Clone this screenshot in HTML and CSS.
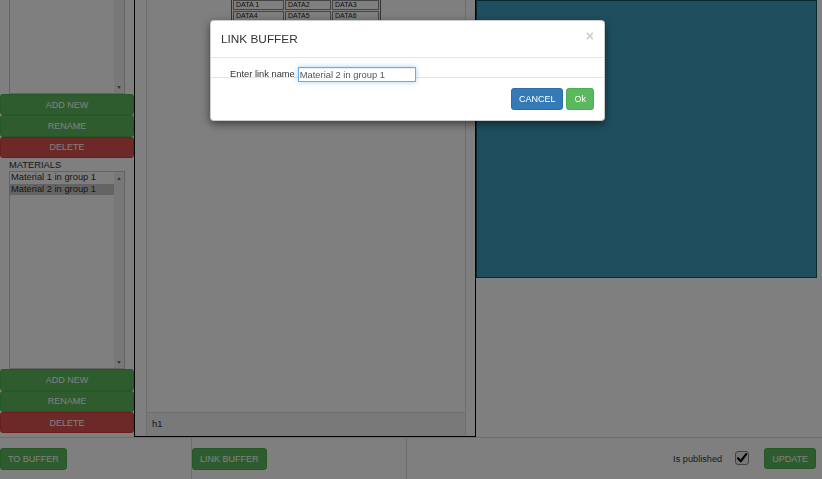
FILE: index.html
```html
<!DOCTYPE html>
<html>
<head>
<meta charset="utf-8">
<title>Editor</title>
<link rel="stylesheet" href="styles.css">
</head>
<body>
<div class="app">
  <div class="main">
    <div class="left">
      <div class="listbox listbox-top">
        <div class="list-items"></div>
        <div class="scrollbar"><span class="arrow-down"></span></div>
      </div>
      <div class="btn-stack">
        <button class="btn btn-success btn-block">ADD NEW</button>
        <button class="btn btn-success btn-block">RENAME</button>
        <button class="btn btn-danger btn-block">DELETE</button>
      </div>
      <div class="list-label">MATERIALS</div>
      <div class="listbox listbox-materials">
        <div class="list-items">
          <div class="list-item">Material 1 in group 1</div>
          <div class="list-item selected">Material 2 in group 1</div>
        </div>
        <div class="scrollbar"><span class="arrow-up"></span><span class="arrow-down"></span></div>
      </div>
      <div class="btn-stack">
        <button class="btn btn-success btn-block">ADD NEW</button>
        <button class="btn btn-success btn-block">RENAME</button>
        <button class="btn btn-danger btn-block">DELETE</button>
      </div>
    </div>
    <div class="center">
      <div class="canvas-panel">
        <div class="canvas-area">
          <table class="data-table">
            <tr><td class="c1">DATA 1</td><td class="c2">DATA2</td><td class="c3">DATA3</td></tr>
            <tr><td class="c1">DATA4</td><td class="c2">DATA5</td><td class="c3">DATA6</td></tr>
            <tr><td class="c1">DATA7</td><td class="c2">DATA8</td><td class="c3">DATA9</td></tr>
          </table>
        </div>
        <div class="panel-footer">h1</div>
      </div>
    </div>
    <div class="right">
      <div class="preview"></div>
    </div>
  </div>
  <div class="bottom-bar">
    <div class="bar-section s1"><button class="btn btn-success btn-bar">TO BUFFER</button></div>
    <div class="bar-section s2"><button class="btn btn-success btn-bar">LINK BUFFER</button></div>
    <div class="bar-section s3">
      <span class="pub-label">Is published</span>
      <span class="checkbox">
        <svg width="14" height="14" viewBox="0 0 14 14"><rect x="0.5" y="0.5" width="13" height="13" rx="2.5" fill="#eeeeee" stroke="#888"/><path d="M3 7.2 L5.8 10.2 L11.2 3.2" fill="none" stroke="#000" stroke-width="2.2" stroke-linecap="round" stroke-linejoin="round"/></svg>
      </span>
      <button class="btn btn-success btn-update">UPDATE</button>
    </div>
  </div>
</div>
<div class="backdrop"></div>
<div class="modal">
  <div class="modal-header">
    <h4 class="modal-title">LINK BUFFER</h4>
    <button class="close">&times;</button>
  </div>
  <div class="modal-body">
    <div class="form-row">
      <label class="form-label">Enter link name</label>
      <input class="form-input" type="text" value="Material 2 in group 1">
    </div>
  </div>
  <div class="modal-footer">
    <button class="btn btn-primary btn-modal">CANCEL</button>
    <button class="btn btn-success btn-modal">Ok</button>
  </div>
</div>
</body>
</html>
```

FILE: styles.css
```css
* { box-sizing: border-box; }
html, body { margin: 0; padding: 0; }
body {
  font-family: "Liberation Sans", Arial, sans-serif;
  font-size: 9.33px;
  color: #333;
  background: #fff;
  width: 822px;
  height: 479px;
  overflow: hidden;
}
.app { display: flex; flex-direction: column; height: 479px; }
.main { display: flex; height: 437px; }

/* left column */
.left { width: 134px; display: flex; flex-direction: column; }
.listbox {
  display: flex;
  margin: 0 9px 0 9px;
  border: 1px solid #c8c8c8;
  background: #fff;
}
.listbox-top { height: 94px; border-top: none; }
.listbox-materials { height: 198px; }
.list-items { flex: 1; }
.list-item { height: 11.33px; line-height: 11.33px; padding-left: 1px; white-space: nowrap; }
.list-item.selected { background: #c8c8c8; }
.scrollbar {
  width: 10px;
  background: #f1f1f1;
  display: flex;
  flex-direction: column;
  justify-content: space-between;
  align-items: center;
  padding: 5px 0 4px;
}
.listbox-top .scrollbar { justify-content: flex-end; }
.arrow-up, .arrow-down {
  width: 0; height: 0;
  border-left: 2.5px solid transparent;
  border-right: 2.5px solid transparent;
}
.arrow-up { border-bottom: 3px solid #777; }
.arrow-down { border-top: 3px solid #777; }
.list-label { height: 13.33px; line-height: 14.5px; padding-left: 9px; }
.btn-stack { display: flex; flex-direction: column; }

/* buttons */
.btn {
  font-family: "Liberation Sans", Arial, sans-serif;
  font-size: 9px;
  color: #fff;
  border: 1px solid transparent;
  border-radius: 2.7px;
  padding: 0 7px;
  white-space: nowrap;
  cursor: pointer;
}
.btn-block { width: 100%; height: 21.33px; }
.btn-success { background: #5cb85c; border-color: #4cae4c; }
.btn-danger { background: #d9534f; border-color: #d43f3a; }
.btn-primary { background: #337ab7; border-color: #2e6da4; }
.btn-bar { height: 22px; }
.btn-update { height: 21px; margin-left: 15px; }
.btn-modal { height: 22px; }

/* center */
.center {
  width: 342px;
  border-left: 1px solid #000;
  border-right: 1px solid #000;
  border-bottom: 1px solid #000;
  padding: 0 9px 0 11px;
  display: flex;
}
.canvas-panel {
  flex: 1;
  border-left: 1px solid #ddd;
  border-right: 1px solid #ddd;
  display: flex;
  flex-direction: column;
}
.canvas-area { flex: 1; overflow: hidden; }
.data-table {
  margin: -2px auto 0;
  border-collapse: separate;
  border-spacing: 1px;
  border: 1px solid #666;
}
.data-table td {
  box-sizing: content-box;
  border: 1px solid #8a8a8a;
  font-size: 7px;
  line-height: 8px;
  height: 8px;
  padding: 0 2px;
  color: #222;
  white-space: nowrap;
}
.data-table td.c1 { width: 45px; }
.data-table td.c2 { width: 40px; }
.data-table td.c3 { width: 41px; }
.panel-footer {
  height: 24px;
  border-top: 1px solid #ddd;
  background: #f2f2f2;
  padding-left: 5px;
  line-height: 22px;
}

/* right */
.right { flex: 1; }
.preview {
  width: 341px;
  height: 278px;
  background: #3e9ebe;
  border: 1px solid #145064;
}

/* bottom bar */
.bottom-bar { height: 42px; border-top: 1px solid #ddd; display: flex; }
.bar-section { display: flex; align-items: center; }
.s1 { width: 191px; }
.s2 { width: 215px; border-left: 1px solid #ddd; }
.s3 { flex: 1; border-left: 1px solid #ddd; justify-content: flex-end; padding-right: 6px; }
.pub-label { font-size: 9.2px; }
.checkbox { display: flex; margin-left: 13px; margin-top: -2px; }

/* modal */
.backdrop { position: fixed; left: 0; top: 0; right: 0; bottom: 0; background: rgba(0,0,0,0.5); }
.modal {
  position: absolute;
  left: 210px;
  top: 20px;
  width: 395px;
  background: #fff;
  border: 1px solid rgba(0,0,0,0.2);
  border-radius: 4px;
  box-shadow: 0 3px 9px rgba(0,0,0,0.5);
}
.modal-header {
  padding: 10px;
  border-bottom: 1px solid #e5e5e5;
  display: flex;
  justify-content: space-between;
  align-items: flex-start;
}
.modal-title { margin: 0; font-size: 11.8px; line-height: 16px; font-weight: normal; color: #333; }
.close {
  font-family: "Liberation Sans", Arial, sans-serif;
  font-size: 14px;
  font-weight: bold;
  line-height: 1;
  color: #000;
  opacity: 0.2;
  background: none;
  border: 0;
  padding: 0;
  margin-top: -2px;
}
.modal-body { padding: 10px 10px 9px; }
.form-row {
  height: 0;
  display: flex;
  align-items: flex-start;
  padding-left: 9px;
  gap: 3px;
  margin-top: -1px;
}
.form-label { line-height: 15px; color: #333; white-space: nowrap; }
.form-input {
  width: 118px;
  height: 15px;
  border: 1px solid #66afe9;
  padding: 0 1px;
  font-family: "Liberation Sans", Arial, sans-serif;
  font-size: 9.33px;
  color: #555;
  outline: none;
  box-shadow: inset 0 1px 1px rgba(0,0,0,0.075), 0 0 5px rgba(102,175,233,0.6);
}
.modal-footer {
  border-top: 1px solid #e5e5e5;
  padding: 10px;
  display: flex;
  justify-content: flex-end;
  gap: 3px;
}
```
